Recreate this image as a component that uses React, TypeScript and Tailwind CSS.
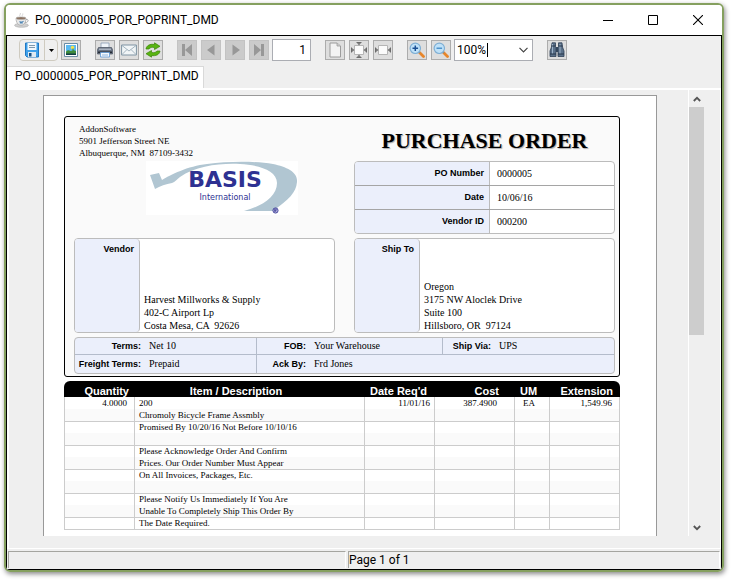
import type { ReactNode } from "react";

const iconBtn =
  "flex h-5 w-5 shrink-0 items-center justify-center border border-[#acacac] bg-[#dedede]";
const navBtn =
  "flex h-5 w-5 shrink-0 items-center justify-center border border-[#c3c3c3] bg-[#cbcbcb]";
const boxBorder = "rounded border border-[#bcbcbc]";

function ToolButton({
  label,
  disabled,
  children,
}: {
  label: string;
  disabled?: boolean;
  children: ReactNode;
}) {
  return (
    <button
      type="button"
      aria-label={label}
      disabled={disabled}
      className={disabled ? navBtn : iconBtn}
    >
      <svg viewBox="0 0 16 16" className="h-4 w-4 shrink-0">
        {children}
      </svg>
    </button>
  );
}

function CupIcon() {
  return (
    <svg viewBox="0 0 16 16" className="h-4 w-4 shrink-0">
      <ellipse cx="7.5" cy="13.3" rx="7" ry="2" fill="#cfcfcf" stroke="#a9a9a9" strokeWidth=".6" />
      <path d="M2 6.2h10c0 4-1.8 7-5 7s-5-3-5-7z" fill="#e9e9e9" stroke="#a5a5a5" strokeWidth=".7" />
      <ellipse cx="7" cy="6.2" rx="5" ry="1.3" fill="#8a6f5c" stroke="#b5b5b5" strokeWidth=".6" />
      <path d="M12 7.5c3-.8 3 3-1 3.2" fill="none" stroke="#a9a9a9" />
      <path d="M5.5 9.5c1.5 1 3 .8 4-.5M5.800 11h3" fill="none" stroke="#4e86b5" strokeWidth="1.2" />
      <path d="M6 4.5c-1-1.5 1-2 .3-3.5M8.500 4.5c-1-1.5 1-2 .3-3" fill="none" stroke="#c9c9c9" strokeWidth=".8" />
    </svg>
  );
}

function SaveIcon() {
  return (
    <svg viewBox="0 0 16 16" className="h-4 w-4">
      <path d="M1.5 1h13v14H3l-1.500-1.500z" fill="#3fa0ea" stroke="#1f78c4" />
      <path d="M3.5 1h9v7h-9z" fill="#f2f8fd" />
      <path d="M5 3.5h6M5 5.5h6" stroke="#7f98ad" />
      <path d="M4 10h8v5H4z" fill="#dfe9f1" />
      <path d="M5 11h2.5v3.5H5z" fill="#174f83" />
    </svg>
  );
}

function PictureIcon() {
  return (
    <>
      <path d="M1.5 1.5h13v13h-13z" fill="#fff" stroke="#6a8ca5" />
      <path d="M3 3h10v6H3z" fill="#5bb9f0" />
      <circle cx="9.5" cy="5.5" r="1.7" fill="#f7e14a" />
      <path d="M3 9.5c2-2 3-1.500 4.500-.5l2-.5V6.500h1v1.500l2.500 1V13H3z" fill="#3d8a3c" />
      <path d="M3 11.5h10V13H3z" fill="#123c46" />
    </>
  );
}

function PrinterIcon() {
  return (
    <>
      <path d="M4 1h8v5H4z" fill="#eef3f9" stroke="#8b9db5" strokeWidth=".8" />
      <path d="M1.5 5.5h13l1 2v4.500H.5V7.500z" fill="#6b7585" stroke="#4a5361" strokeWidth=".7" />
      <path d="M2 6.5h12V8H2z" fill="#a9b2c0" />
      <path d="M1 9.5h14V11H1z" fill="#252b34" />
      <path d="M3.5 10.5h9V15h-9z" fill="#f6f9fd" stroke="#5f9bd8" strokeWidth=".8" />
      <path d="M5 13h6" stroke="#8db4dc" />
    </>
  );
}

function MailIcon() {
  return (
    <>
      <path d="M.6 3h14.8v10H.6z" fill="#f1f5f7" stroke="#7e93a3" />
      <path d="M1 3.5 8 9l7-5.500M1 12.500l5-5M15 12.500l-5-5" fill="none" stroke="#9aabb8" strokeWidth=".9" />
    </>
  );
}

function RefreshIcon() {
  return (
    <>
      <path d="M1 7C1.500 3.500 5 1.700 9.500 2.500V.8L15 4.300 9.500 7.500V5.600C7 5 5 5.500 4 7z" fill="#58b411" stroke="#3b8408" strokeWidth=".7" />
      <path d="M15 9c-.5 3.500-4 5.300-8.500 4.500v1.700L1 11.700 6.500 8.500v1.900C9 11 11 10.500 12 9z" fill="#58b411" stroke="#3b8408" strokeWidth=".7" />
    </>
  );
}

function FitIcon({ vertical }: { vertical?: boolean }) {
  return (
    <>
      <path d="M3.5 3.5h9v9h-9z" fill="#fbfbfb" stroke="#b5b5b5" />
      <path d="M.5 5.500v5M.5 8h2M15.500 5.500v5M13.500 8h2" stroke="#6c6c6c" />
      <path d="M1 6v4l2.500-2zM15 6v4l-2.500-2z" fill="#7c7c7c" />
      {vertical && (
        <>
          <path d="M5.500 .5h5M5.500 15.500h5" stroke="#6c6c6c" />
          <path d="M6 1h4L8 3.500zM6 15h4l-2-2.500z" fill="#7c7c7c" />
        </>
      )}
    </>
  );
}

function ZoomIcon({ plus }: { plus?: boolean }) {
  return (
    <>
      <path d="m10.5 10.5 4 4" stroke="#e8862a" strokeWidth="2.8" strokeLinecap="round" />
      <path d="m9.5 9.5 1.5 1.5" stroke="#8a8a8a" strokeWidth="1.5" />
      <circle cx="6.3" cy="6.3" r="5.2" fill="#bfe1f8" stroke="#7fafd4" strokeWidth="1.2" />
      <path d="M3.5 6.3h5.6" stroke={plus ? "#1a4f94" : "#4f93cb"} strokeWidth="1.5" />
      {plus && <path d="M6.3 3.5v5.6" stroke="#1a4f94" strokeWidth="1.5" />}
    </>
  );
}

function BinocularsIcon() {
  return (
    <>
      <path d="M3 .8h3.500v3.700l.5 2v8H1V9l1.500-4z" fill="#5a7089" stroke="#2f4056" strokeWidth=".8" />
      <path d="M13 .8H9.500v3.700l-.5 2v8h6V9l-1.500-4z" fill="#5a7089" stroke="#2f4056" strokeWidth=".8" />
      <path d="M7 5h2v5H7z" fill="#33465c" />
      <path d="M3.5 2v10M11 2v10" stroke="#9cb2c8" />
      <path d="M1 12h6M9 12h6M2.500 4h4M9.500 4h4" stroke="#26364a" />
    </>
  );
}

function BasisLogo() {
  return (
    <svg viewBox="0 0 152 54" className="h-[54px] w-[152px] bg-white" role="img" aria-label="BASIS International">
      <path
        d="M4 14 13 12l3 7C24 14 42 5 61 3c22-3 48-3 66 0 14 3 25 8 24 18-1 11-8 17-24 29H98c18-5 33-14 33-28 0-13-19-18-37-19-20-1-44 2-60 13-3 2-5 5-8 6-6 1-12 3-17 6z"
        fill="#b1c6d2"
      />
      <text x="79" y="26" fontSize="22" textAnchor="middle" fill="#2e3192" fontFamily="'DejaVu Sans', sans-serif" fontWeight="bold">
        BASIS
      </text>
      <text x="79" y="39" fontSize="8" textAnchor="middle" fill="#2e3192" fontFamily="'DejaVu Sans', sans-serif">
        International
      </text>
      <circle cx="129.5" cy="49.5" r="2.6" fill="#b9b7dc" stroke="#2e3192" strokeWidth=".8" />
      <path d="M128.700 51v-3h1.500v1.500h-1.500l1.600 1.500" fill="none" stroke="#2e3192" strokeWidth=".6" />
    </svg>
  );
}

const orderInfo = [
  { label: "PO Number", value: "0000005" },
  { label: "Date", value: "10/06/16" },
  { label: "Vendor ID", value: "000200" },
];

const lines = [
  "200",
  "Chromoly Bicycle Frame Assmbly",
  "Promised By 10/20/16 Not Before 10/10/16",
  "",
  "Please Acknowledge Order And Confirm",
  "Prices. Our Order Number Must Appear",
  "On All Invoices, Packages, Etc.",
  "",
  "Please Notify Us Immediately If You Are",
  "Unable To Completely Ship This Order By",
  "The Date Required.",
];

function AddressBox({ title, address }: { title: string; address: string[] }) {
  return (
    <div className={`flex h-[95px] overflow-hidden bg-white ${boxBorder}`}>
      <div className="w-[65px] shrink-0 rounded-r border-r border-[#bcbcbc] bg-[#ebeffb] pt-1 pr-[5px] text-right font-['Liberation_Sans',sans-serif] text-[9px] leading-3 font-bold">
        {title}
      </div>
      <div className="flex flex-col justify-end pl-1 text-[10px] leading-[13px]">
        {address.map((line) => (
          <p key={line} className="whitespace-pre">
            {line}
          </p>
        ))}
      </div>
    </div>
  );
}

function Term({ label, value, labelWidth }: { label: string; value: string; labelWidth: string }) {
  return (
    <>
      <span className={`shrink-0 text-right font-['Liberation_Sans',sans-serif] text-[9px] font-bold ${labelWidth}`}>
        {label}
      </span>
      <span className="pl-2 text-[10px]">{value}</span>
    </>
  );
}

function PurchaseOrder() {
  return (
    <div className="min-w-0 flex-1 border border-b-0 border-[#999] bg-white pt-5 pr-9 pb-[6px] pl-5 font-['Liberation_Serif',serif] text-black">
      <section className="rounded-[3px] border border-black bg-[#fafafa] pr-1 pb-0.5 pl-[9px]">
        <div className="grid grid-cols-2 gap-x-[19px] gap-y-1">
          <div className="pt-1.5 pl-[5px]">
            <address className="text-[9px] leading-3 whitespace-pre not-italic">
              {"AddonSoftware\n5901 Jefferson Street NE\nAlbuquerque, NM  87109-3432"}
            </address>
            <div className="pt-0.5 pl-[67px]">
              <BasisLogo />
            </div>
          </div>
          <div>
            <h1 className="pt-3 pb-2 text-center text-[22px] leading-6 font-bold [text-shadow:1px_1px_1px_#aaa]">
              PURCHASE ORDER
            </h1>
            <dl className={`overflow-hidden bg-white ${boxBorder}`}>
              {orderInfo.map((row) => (
                <div key={row.label} className="flex h-6 items-center border-b border-[#a5a5a5] last:h-[23px] last:border-b-0">
                  <dt className="flex h-full w-[135px] shrink-0 items-center justify-end border-r border-[#bcbcbc] bg-[#ebeffb] pr-[5px] font-['Liberation_Sans',sans-serif] text-[9px] font-bold">
                    {row.label}
                  </dt>
                  <dd className="pl-[7px] text-[10px]">{row.value}</dd>
                </div>
              ))}
            </dl>
          </div>
          <AddressBox
            title="Vendor"
            address={["Harvest Millworks & Supply", "402-C Airport Lp", "Costa Mesa, CA  92626"]}
          />
          <AddressBox
            title="Ship To"
            address={["Oregon", "3175 NW Aloclek Drive", "Suite 100", "Hillsboro, OR  97124"]}
          />
        </div>

        <div className={`mt-1 bg-[#ebeffb] ${boxBorder}`}>
          <div className="flex h-[17px] border-b border-[#b4bccb] leading-4">
            <div className="flex w-[182px] border-r border-[#b4bccb]">
              <Term label="Terms:" value="Net 10" labelWidth="w-[66px]" />
            </div>
            <div className="flex w-[186px] border-r border-[#b4bccb]">
              <Term label="FOB:" value="Your Warehouse" labelWidth="w-[49px]" />
            </div>
            <div className="flex">
              <Term label="Ship Via:" value="UPS" labelWidth="w-12" />
            </div>
          </div>
          <div className="flex h-[18px] leading-[18px]">
            <div className="flex w-[182px] border-r border-[#b4bccb]">
              <Term label="Freight Terms:" value="Prepaid" labelWidth="w-[66px]" />
            </div>
            <div className="flex">
              <Term label="Ack By:" value="Frd Jones" labelWidth="w-[49px]" />
            </div>
          </div>
        </div>
      </section>

      <table className="mt-1 w-full table-fixed border-separate border-spacing-0 text-[9px]">
        <thead className="font-['Liberation_Sans',sans-serif] text-[11px] leading-3 text-white">
          <tr className="h-4">
            <th className="w-[70px] rounded-tl-md bg-black p-0 pt-1 pr-[5px] text-right">Quantity</th>
            <th className="bg-black p-0 pt-1 pr-[26px] text-center">Item / Description</th>
            <th className="w-[70px] bg-black p-0 pt-1 pr-[7px] text-right">Date Req'd</th>
            <th className="w-20 bg-black p-0 pt-1 pr-[15px] text-right">Cost</th>
            <th className="w-[35px] bg-black p-0 pt-1 pr-[6px] text-center">UM</th>
            <th className="w-[71px] rounded-tr-md bg-black p-0 pt-1 pr-[7px] text-right">Extension</th>
          </tr>
        </thead>
        <tbody>
          {lines.map((line, i) => {
            const shaded = i % 2 === 1;
            let cell = "h-3 p-0 border-l border-[#ccc] leading-3";
            if (i === lines.length - 1) {
              cell = "h-[13px] p-0 border-l border-t border-b border-[#ccc] leading-[11px]";
            } else if (!shaded && i > 0) {
              cell = "h-3 p-0 border-l border-t border-[#ccc] leading-[11px]";
            }
            return (
              <tr key={i} className={shaded ? "bg-[#fafafa]" : "bg-white"}>
                <td className={`${cell} pr-[7px] text-right`}>{i === 0 && "4.0000"}</td>
                <td className={`${cell} pl-1 whitespace-nowrap`}>{line}</td>
                <td className={`${cell} pr-1 text-right`}>{i === 0 && "11/01/16"}</td>
                <td className={`${cell} pr-[17px] text-right`}>{i === 0 && "387.4900"}</td>
                <td className={`${cell} pr-[6px] text-center`}>{i === 0 && "EA"}</td>
                <td className={`${cell} border-r pr-[7px] text-right`}>{i === 0 && "1,549.96"}</td>
              </tr>
            );
          })}
        </tbody>
      </table>
    </div>
  );
}

function Toolbar() {
  return (
    <div className="mb-0.5 flex h-7 items-center gap-[14px] pl-3">
      <div className="flex items-center gap-[3px]">
        <div className="flex h-[22px] rounded border border-[#cfcbc0]">
          <button type="button" aria-label="Save" className="flex w-[25px] items-center justify-center border-r border-[#cfcbc0]">
            <SaveIcon />
          </button>
          <button type="button" aria-label="Save options" className="flex w-3 items-center justify-center">
            <svg viewBox="0 0 5 3" className="h-[3px] w-[5px]">
              <path d="M0 0h5L2.500 3z" />
            </svg>
          </button>
        </div>
        <ToolButton label="Export image">
          <PictureIcon />
        </ToolButton>
      </div>
      <div className="flex gap-1">
        <ToolButton label="Print">
          <PrinterIcon />
        </ToolButton>
        <ToolButton label="Email">
          <MailIcon />
        </ToolButton>
        <ToolButton label="Refresh">
          <RefreshIcon />
        </ToolButton>
      </div>
      <div className="flex items-center gap-[3px]">
        <div className="flex gap-1">
          <ToolButton label="First page" disabled>
            <path d="M3 2h3v12H3zM13 2v12L6 8z" fill="#989898" />
          </ToolButton>
          <ToolButton label="Previous page" disabled>
            <path d="M11.5 2.5v11L4 8z" fill="#989898" />
          </ToolButton>
          <ToolButton label="Next page" disabled>
            <path d="M5.5 2.5v11L13 8z" fill="#989898" />
          </ToolButton>
          <ToolButton label="Last page" disabled>
            <path d="M10 2h3v12h-3zM3 2v12l7-6z" fill="#989898" />
          </ToolButton>
        </div>
        <input
          aria-label="Page number"
          defaultValue="1"
          className="h-[22px] w-[39px] border border-[#abadb3] bg-white pr-1 text-right outline-none"
        />
      </div>
      <div className="flex gap-1">
        <ToolButton label="Actual size">
          <path d="M3 1h7l3.500 3v11H3z" fill="#f3f3f3" stroke="#9c9c9c" />
          <path d="M10 1v3h3.5" fill="#cfcfcf" stroke="#9c9c9c" strokeWidth=".8" />
        </ToolButton>
        <ToolButton label="Fit page">
          <FitIcon vertical />
        </ToolButton>
        <ToolButton label="Fit width">
          <FitIcon />
        </ToolButton>
      </div>
      <div className="flex items-center gap-[3px]">
        <div className="flex gap-1">
          <ToolButton label="Zoom in">
            <ZoomIcon plus />
          </ToolButton>
          <ToolButton label="Zoom out">
            <ZoomIcon />
          </ToolButton>
        </div>
        <div className="relative flex h-[22px] w-[79px] items-center border border-[#abadb3] bg-white">
          <input aria-label="Zoom" defaultValue="100%" className="w-[60px] pl-0.5 outline-none" />
          <span className="absolute top-[3px] left-8 h-[14px] w-px bg-black" />
          <button type="button" aria-label="Zoom levels" className="flex w-4 items-center justify-center">
            <svg viewBox="0 0 9 6" className="h-1.5 w-[9px]">
              <path d="m.5 .8 4 4 4-4" fill="none" stroke="#444" strokeWidth="1.2" />
            </svg>
          </button>
        </div>
      </div>
      <ToolButton label="Search">
        <BinocularsIcon />
      </ToolButton>
    </div>
  );
}

function App() {
  return (
    <div className="flex min-h-screen flex-col bg-white pt-[3px] pr-2 pb-2 pl-1 font-[Roboto,sans-serif] text-[12px] text-black">
      <div className="flex flex-1 flex-col overflow-hidden rounded-md border-2 border-[#85a05f] shadow-[1px_2px_5px_#888]">
        {/* Title bar */}
        <header className="flex h-[30px] shrink-0 items-center bg-white pr-px pl-2">
          <CupIcon />
          <h2 className="flex-1 pl-[5px]">PO_0000005_POR_POPRINT_DMD</h2>
          <button type="button" aria-label="Minimize" className="flex w-[45px] justify-center">
            <svg viewBox="0 0 10 10" className="h-2.5 w-2.5">
              <path d="M0 5.5h10" stroke="#000" />
            </svg>
          </button>
          <button type="button" aria-label="Maximize" className="flex w-[45px] justify-center">
            <svg viewBox="0 0 10 10" className="h-2.5 w-2.5">
              <path d="M.5 .5h9v9h-9z" fill="none" stroke="#000" />
            </svg>
          </button>
          <button type="button" aria-label="Close" className="flex w-[46px] justify-center">
            <svg viewBox="0 0 10 10" className="h-2.5 w-2.5">
              <path d="m0 0 10 10M10 0 0 10" stroke="#000" strokeWidth="1.1" />
            </svg>
          </button>
        </header>

        <main className="flex flex-1 flex-col border border-black bg-[#efefef]">
          <Toolbar />
          <div role="tablist" className="flex">
            <button
              type="button"
              role="tab"
              aria-selected="true"
              className="flex h-[22px] border-t border-r border-[#d9d9d9] bg-white pr-1 pl-2 leading-[19px]"
            >
              PO_0000005_POR_POPRINT_DMD
            </button>
          </div>

          {/* Report view */}
          <div className="flex flex-1 border-t-2 border-r border-l-2 border-white pb-3">
            <div className="flex min-w-0 flex-1 pt-[5px] pr-[31px] pl-[34px]">
              <PurchaseOrder />
            </div>
            <div className="mr-4 flex w-4 flex-col border-l border-white">
              <button type="button" aria-label="Scroll up" className="flex h-[17px] items-center justify-center">
                <svg viewBox="0 0 8 6" className="h-1.5 w-2">
                  <path d="m.8 5 3.200-3.200L7.200 5" fill="none" stroke="#555" strokeWidth="1.8" />
                </svg>
              </button>
              <div className="flex-1">
                <div className="h-[228px] bg-[#cdcdcd]" />
              </div>
              <button type="button" aria-label="Scroll down" className="flex h-[17px] items-center justify-center">
                <svg viewBox="0 0 8 6" className="h-1.5 w-2">
                  <path d="m.8 1 3.200 3.200L7.200 1" fill="none" stroke="#555" strokeWidth="1.8" />
                </svg>
              </button>
            </div>
          </div>

          {/* Status bar */}
          <footer className="flex h-[21px] gap-0.5 border-t border-white pt-0.5 pr-px pb-px pl-px leading-4">
            <div className="w-[338px] border-t border-l border-r border-t-[#a5a5a0] border-l-[#a5a5a0] border-r-white" />
            <div className="flex-1 border-t border-l border-r border-t-[#a5a5a0] border-l-[#a5a5a0] border-r-white">
              Page 1 of 1
            </div>
          </footer>
        </main>
      </div>
    </div>
  );
}

export default App;
